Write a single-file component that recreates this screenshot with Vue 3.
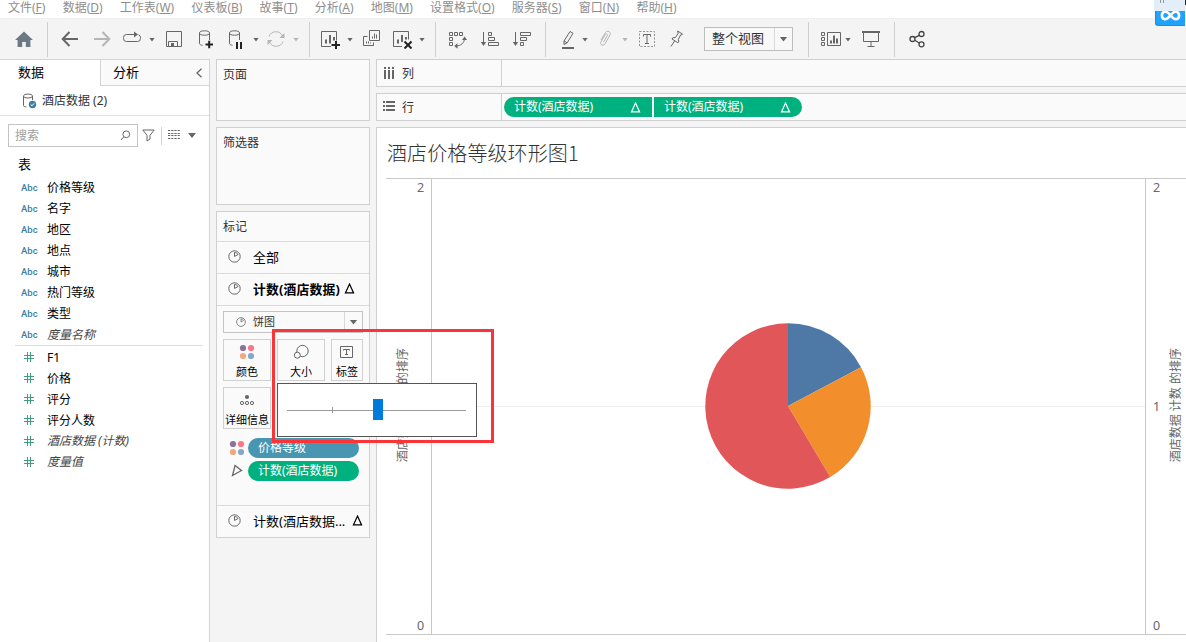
<template>
  <div class="app">
    <nav class="menubar">
      <span v-for="m in menus" :key="m.key" class="menu">{{ m.label }}(<u>{{ m.key }}</u>)</span>
    </nav>

    <div class="toolbar">
      <svg class="tool g14" viewBox="0 0 20 20"><path d="M10 2.500 19 11h-2.600v7h-4.600v-5H8.200v5H3.600v-7H1z" fill="#6b7885" /></svg>
      <i class="sep g13"></i>
      <svg class="tool g12" viewBox="0 0 20 20"><path d="M18 10H3M9.500 3 2.700 10l6.800 7" class="st thick" /></svg>
      <svg class="tool g12 off" viewBox="0 0 20 20"><path d="M2 10h15M10.500 3l6.800 7-6.800 7" class="st thick" /></svg>
      <svg class="tool g10" viewBox="0 0 20 20"><path d="M11 5.500H4.500a3 3 0 0 0-3 3v1a3 3 0 0 0 3 3h11a3 3 0 0 0 3-3v-1a3 3 0 0 0-2-2.800M9 5.500h4" class="st" /><path d="M12 2.500 16 5.500 12 8.500z" fill="#666" /></svg>
      <i class="caret g7"></i>
      <svg class="tool g9" viewBox="0 0 20 20"><path d="M2.500 2.500h15v15h-15zM4.500 17v-4.500h9V17" class="st" /><path d="M7 14h3v3H7z" fill="#666" /></svg>
      <svg class="tool g12" viewBox="0 0 20 20"><path d="M3.500 4v10.500c0 1 1.500 1.600 3 1.800M13.500 4v7" class="st" /><ellipse cx="8.500" cy="4" rx="5" ry="2.200" class="st" /><path d="M9.500 15.500h7.500M13.200 11.700v7.600" stroke="#222" stroke-width="2" /></svg>
      <svg class="tool g10" viewBox="0 0 20 20"><path d="M3.500 4v10.500c0 1 1.500 1.600 3 1.800M13.500 4v7" class="st" /><ellipse cx="8.500" cy="4" rx="5" ry="2.200" class="st" /><path d="M11 13v7M15 13v7" stroke="#222" stroke-width="2" /></svg>
      <i class="caret g7"></i>
      <svg class="tool g7 off" viewBox="0 0 20 20"><path d="M3 7.500A7.300 7.300 0 0 1 16.500 7M17 12.500A7.300 7.300 0 0 1 3.500 13" class="st" /><path d="M18.500 4v5h-5zM1.500 16v-5h5z" fill="#b5b5b5" /></svg>
      <i class="caret g7 off"></i>
      <i class="sep g10"></i>
      <svg class="tool g10" viewBox="0 0 20 20"><path d="M11 17.500H1.500v-15h15v9" class="st" /><path d="M6 14.500v-4M10 14.500V6M14 11.500V8" stroke="#666" stroke-width="2" /><path d="M11.500 16H20M16 12v8" stroke="#222" stroke-width="2" /></svg>
      <i class="caret g7"></i>
      <svg class="tool g8" viewBox="0 0 20 20"><path d="M8.500 1.500h10v10h-10zM6.500 7.500h-4v9h10v-3" class="st" /><path d="M11.500 9.500V7.500M13.500 9.500v-5M15.500 9.500v-4M5.500 14.500v-2M7.500 14.500v-2M9.500 14.500v-1" class="st" /></svg>
      <svg class="tool g11" viewBox="0 0 20 20"><path d="M10 17.500H1.500v-15h15v8" class="st" /><path d="M6 14.500v-4M10 13V6M14 10.500V8" stroke="#666" stroke-width="2" /><path d="m12.500 12.500 7 7M19.500 12.500l-7 7" stroke="#222" stroke-width="2" /></svg>
      <i class="caret g7"></i>
      <i class="sep g10"></i>
      <svg class="tool g11" viewBox="0 0 20 20"><path d="M2.500 3.500h3v3h-3zM7.500 3.500h3v3h-3zM12.500 3.500h3v3h-3zM2.500 8.500h3v3h-3zM2.500 13.500h3v3h-3zM17.500 9.500c0 4-3.500 7.500-8.500 7.500" class="st" /><path d="m15 11 2.700-3.500L20 11zM10.500 14.200 7.200 17l3.300 2.800z" fill="#666" /></svg>
      <svg class="tool g13" viewBox="0 0 20 20"><path d="M3.500 3v12M8.500 3.500h3v3h-3zM8.500 8.500h6v3h-6zM8.500 13.500h10v3h-10z" class="st" /><path d="M.8 13h5.400L3.500 17z" fill="#666" /></svg>
      <svg class="tool g12" viewBox="0 0 20 20"><path d="M3.500 3v12M8.500 3.500h10v3h-10zM8.500 8.500h6v3h-6zM8.500 13.500h3v3h-3z" class="st" /><path d="M.8 13h5.400L3.500 17z" fill="#666" /></svg>
      <i class="sep g13"></i>
      <svg class="tool g12" viewBox="0 0 20 20"><path d="m6 12 6-9.500 3 1.800-5.800 9.500L6 15.500zM6 12l3.200 1.800" class="st" /><path d="M4 19h12" stroke="#666" stroke-width="2" /></svg>
      <i class="caret g4"></i>
      <svg class="tool g7 off" viewBox="0 0 20 20"><path d="m6 11 4.500-7.500c1.700-2.700 6-.8 4.500 2.300l-5 9c-1.500 2.800-5.500 1-4.200-1.800l4.400-7.300c1-1.400 2.800-.3 2.200 1L8.500 13" class="st" /></svg>
      <i class="caret g7 off"></i>
      <svg class="tool g9" viewBox="0 0 20 20"><path d="M2.500 2.500h15v15h-15z" class="st" stroke-dasharray="2 1.500" opacity=".7" /><path d="M6.500 7.500v-2h7v2M10 5.500v9M8 14.500h4" class="st" /></svg>
      <svg class="tool g10" viewBox="0 0 20 20"><path d="m10.500 2 5 3-1 1-.8-.2-2.400 4.700.6 2.500-1.400.5L5 10l.8-1.200 2.700-.3 2.700-4.300zM7.500 12 4 17.500" class="st" /></svg>
      <div class="combo g17"><span>整个视图</span><b><i class="caret wide"></i></b></div>
      <i class="sep g15"></i>
      <svg class="tool g12" viewBox="0 0 20 20"><path d="M.5 3.500h3v3h-3zM.5 8.500h3v3h-3zM.5 13.500h3v3h-3zM6.500 3.500h13v13h-13z" class="st" /><path d="M10 14.500v-3M13 14.500v-8M16 14.500v-5" stroke="#666" stroke-width="2" /></svg>
      <i class="caret g4"></i>
      <svg class="tool g10" viewBox="0 0 20 20"><path d="M2.500 4v8.500h15V4M10 12.500v5M6.500 17.500h7" class="st" /><path d="M1 3h18" stroke="#666" stroke-width="2" /></svg>
      <i class="sep g13"></i>
      <svg class="tool g12" viewBox="0 0 20 20"><circle cx="5.500" cy="10" r="2.500" class="st dk" /><circle cx="14.500" cy="5" r="2.500" class="st dk" /><circle cx="14.500" cy="15.300" r="2.500" class="st dk" /><path d="m7.700 8.700 4.600-2.400M7.700 11.300l4.600 2.700" class="st dk" /></svg>
    </div>

    <main class="work">
      <aside class="data-pane">
        <div class="tabs">
          <div class="tab on">数据</div>
          <div class="tab">分析<svg width="8" height="10" viewBox="0 0 8 10"><path d="M6.500.8 2 5l4.500 4.200" class="st collapse" /></svg></div>
        </div>
        <div class="source">
          <svg width="16" height="16" viewBox="0 0 16 16"><path d="M1.500 3v9.500c0 .8 1.200 1.300 3 1.500M10.500 3v4" class="st" /><ellipse cx="6" cy="3" rx="4.500" ry="2" class="st" /><circle cx="10.500" cy="11.500" r="3.700" fill="#3d7f9f" /><path d="m8.700 11.500 1.300 1.300 2.200-2.500" fill="none" stroke="#fff" /></svg>
          <span>酒店数据 (2)</span>
        </div>
        <div class="search-row">
          <div class="search"><span>搜索</span><svg width="11" height="11" viewBox="0 0 11 11"><circle cx="6.300" cy="4.300" r="3.400" class="st" /><path d="M3.800 6.800 1 10" class="st" /></svg></div>
          <svg class="funnel" width="13" height="13" viewBox="0 0 13 13"><path d="M.8 1h11.400L8 6.300V10l-3 2V6.300z" class="st" /></svg>
          <i class="vline"></i>
          <svg class="list-ico" width="12" height="9" viewBox="0 0 12 9"><path d="M0 .5h12M0 3.500h12M0 5.500h12M0 8.500h12" stroke="#666" stroke-dasharray="2.200 1" /></svg>
          <i class="caret wide"></i>
        </div>
        <h4>表</h4>
        <ul class="fields">
          <li v-for="f in dimensions" :key="f.name" :class="{ it: f.generated }"><span class="abc">Abc</span>{{ f.name }}</li>
        </ul>
        <ul class="fields measures">
          <li v-for="f in measures" :key="f.name" :class="{ it: f.generated }">
            <svg class="hash" width="10" height="10" viewBox="0 0 10 10"><path d="M3.500 0v10M6.500 0v10M0 3.500h10M0 6.500h10" stroke="#3f9f7d" /></svg>{{ f.name }}
          </li>
        </ul>
      </aside>

      <section class="cards">
        <div class="card pages">页面</div>
        <div class="card filters">筛选器</div>
        <div class="card marks">
          <div class="marks-title">标记</div>
          <div class="mark-row">
            <svg class="pie-ico" viewBox="0 0 13 13"><circle cx="6.500" cy="6.500" r="5.700" class="st" /><path d="M6.500 6.500V2.500M6.500 6.500 10 4.500M6.500 2.500c1.500 0 3 .8 3.500 2" class="st" /></svg>全部
          </div>
          <div class="mark-row bold">
            <svg class="pie-ico" viewBox="0 0 13 13"><circle cx="6.500" cy="6.500" r="5.700" class="st" /><path d="M6.500 6.500V2.500M6.500 6.500 10 4.500M6.500 2.500c1.500 0 3 .8 3.500 2" class="st" /></svg>计数(酒店数据)
            <svg class="delta" viewBox="0 0 10 10"><path d="M5 1 8.700 9H1.300z" /></svg>
          </div>
          <div class="mark-body">
            <div class="select">
              <svg class="pie-ico sm" viewBox="0 0 13 13"><circle cx="6.500" cy="6.500" r="5.700" class="st" /><path d="M6.500 6.500V2.500M6.500 6.500 10 4.500M6.500 2.500c1.500 0 3 .8 3.500 2" class="st" /></svg>
              <span>饼图</span><b><i class="caret wide"></i></b>
            </div>
            <div class="buttons">
              <div class="btn"><svg width="16" height="16" viewBox="0 0 16 16"><circle v-for="d in dots" :key="d.fill" :cx="d.x" :cy="d.y" r="3.100" :fill="d.fill" /></svg>颜色</div>
              <div class="btn"><svg width="16" height="16" viewBox="0 0 16 16"><circle cx="9.500" cy="7" r="5.700" class="st" /><circle cx="4.300" cy="11.200" r="3" class="st cover" /></svg>大小</div>
              <div class="btn narrow"><svg width="16" height="16" viewBox="0 0 16 16"><path d="M1.500 2.500h12v11h-12zM4.500 6.500v-1h6v1M7.500 5.500v5M6 10.500h3" class="st" /></svg>标签</div>
              <div class="btn"><svg width="16" height="16" viewBox="0 0 16 16"><circle cx="8" cy="5" r="2.100" fill="#666" /><circle cx="3" cy="11" r="1.600" class="st" /><circle cx="8" cy="11" r="1.600" class="st" /><circle cx="13" cy="11" r="1.600" class="st" /></svg>详细信息</div>
            </div>
            <div class="pill-row">
              <svg width="16" height="16" viewBox="0 0 16 16"><circle v-for="d in dots" :key="d.fill" :cx="d.x" :cy="d.y" r="3.100" :fill="d.fill" /></svg>
              <span class="pill blue">价格等级</span>
            </div>
            <div class="pill-row">
              <svg width="16" height="16" viewBox="0 0 16 16"><path d="M6 2.500 12.500 7.500 3.500 12.500z" class="st shape" /></svg>
              <span class="pill">计数(酒店数据)</span>
            </div>
          </div>
          <div class="mark-row last">
            <svg class="pie-ico" viewBox="0 0 13 13"><circle cx="6.500" cy="6.500" r="5.700" class="st" /><path d="M6.500 6.500V2.500M6.500 6.500 10 4.500M6.500 2.500c1.500 0 3 .8 3.500 2" class="st" /></svg>计数(酒店数据...
            <svg class="delta" viewBox="0 0 10 10"><path d="M5 1 8.700 9H1.300z" /></svg>
          </div>
        </div>
      </section>

      <section class="canvas">
        <div class="shelf">
          <div class="shelf-name"><svg width="12" height="12" viewBox="0 0 12 12"><path d="M2 0v2M6 0v2M10 0v2M2 3v9M6 3v9M10 3v9" stroke="#666" stroke-width="2" /></svg><span>列</span></div>
        </div>
        <div class="shelf">
          <div class="shelf-name"><svg class="rows-ico" width="12" height="12" viewBox="0 0 12 12"><path d="M0 2h2M0 6h2M0 10h2M3 2h9M3 6h9M3 10h9" stroke="#666" stroke-width="2" /></svg><span>行</span></div>
          <div class="row-pills">
            <span v-for="n in 2" :key="n" class="row-pill">计数(酒店数据)<svg class="delta" viewBox="0 0 10 10"><path d="M5 1 8.700 9H1.300z" /></svg></span>
          </div>
        </div>
        <div class="sheet">
          <h1>酒店价格等级环形图1</h1>
          <div class="chart">
            <div class="axis left">
              <span class="axis-title">酒店数据 计数 的排序</span>
              <div class="ticks"><span>2</span><span>1</span><span>0</span></div>
            </div>
            <div class="plot">
              <svg width="166" height="166" viewBox="-83 -83 166 166">
                <path v-for="s in slices" :key="s.fill" :d="s.d" :fill="s.fill" />
              </svg>
            </div>
            <div class="axis right">
              <div class="ticks"><span>2</span><span>1</span><span>0</span></div>
              <span class="axis-title">酒店数据 计数 的排序</span>
            </div>
          </div>
        </div>
      </section>
    </main>

    <div class="slider-popup">
      <svg width="198" height="52" viewBox="0 0 198 52">
        <path d="M9 26.500h179M54.500 23v6" stroke="#999" />
        <path d="M95 15h10v21H95z" fill="#007bdb" />
      </svg>
    </div>
    <div class="highlight"></div>

    <div class="cloud">
      <svg width="32" height="27" viewBox="0 0 32 27">
        <path d="M0 0h32v11H0z" fill="#e4eef8" />
        <path d="M6.500 0v3M9.500 0v3" stroke="#8c9aa8" />
        <path d="M31 0h1v5h-1z" fill="#222" />
        <path d="M1 11h30v15H4a3 3 0 0 1-3-3z" fill="#22a3fb" />
        <path d="M1.500 11v11.500a3 3 0 0 0 3 3H31" fill="none" stroke="#178ee5" />
        <path d="M16.500 15.500c-2-2.800-3.700-4-5.500-4a4 4 0 0 0 0 7.800c4.500 0 6.500-7.800 11-7.800a4 4 0 0 1 0 7.800c-1.800 0-3.500-1.500-5-3.500" fill="none" stroke="#fff" stroke-width="2.600" />
        <path d="M1 10h30v1H1z" fill="#e4eef8" />
      </svg>
    </div>
  </div>
</template>

<script setup>
const menus = [
  { label: '文件', key: 'F' },
  { label: '数据', key: 'D' },
  { label: '工作表', key: 'W' },
  { label: '仪表板', key: 'B' },
  { label: '故事', key: 'T' },
  { label: '分析', key: 'A' },
  { label: '地图', key: 'M' },
  { label: '设置格式', key: 'O' },
  { label: '服务器', key: 'S' },
  { label: '窗口', key: 'N' },
  { label: '帮助', key: 'H' },
];

const dimensions = [
  { name: '价格等级' },
  { name: '名字' },
  { name: '地区' },
  { name: '地点' },
  { name: '城市' },
  { name: '热门等级' },
  { name: '类型' },
  { name: '度量名称', generated: true },
];

const measures = [
  { name: 'F1' },
  { name: '价格' },
  { name: '评分' },
  { name: '评分人数' },
  { name: '酒店数据 (计数)', generated: true },
  { name: '度量值', generated: true },
];

const dots = [
  { x: 4, y: 4, fill: '#8a739b' },
  { x: 12, y: 4, fill: '#ff7486' },
  { x: 4, y: 12, fill: '#f4a77c' },
  { x: 12, y: 12, fill: '#86a6cb' },
];

// ángulos en grados, desde las 12 en sentido horario
const RADIUS = 82.7;
const point = deg => {
  const a = (deg * Math.PI) / 180;
  return `${(RADIUS * Math.sin(a)).toFixed(2)} ${(-RADIUS * Math.cos(a)).toFixed(2)}`;
};

const slices = [
  { from: 0, to: 62, fill: '#4e79a7' },
  { from: 62, to: 149.3, fill: '#f28e2b' },
  { from: 149.3, to: 360, fill: '#e15759' },
].map(s => ({
  fill: s.fill,
  d: `M0 0L${point(s.from)}A${RADIUS} ${RADIUS} 0 ${s.to - s.from > 180 ? 1 : 0} 1 ${point(s.to)}Z`,
}));
</script>

<style>
body {
  margin: 0;
  overflow: hidden;
}
</style>

<style scoped>
.app {
  position: relative;
  display: flex;
  flex-direction: column;
  width: 1186px;
  height: 642px;
  overflow: hidden;
  background: #f4f4f4;
  color: #333;
  font: 12px/16px "Noto Sans", "Noto Sans CJK SC", sans-serif;
}
.app * { box-sizing: border-box; }
svg { display: block; flex: none; }
.st { fill: none; stroke: #666; stroke-width: 1; }
.st.thick { stroke-width: 2; }
.st.dk { stroke: #444; stroke-width: 1.3; }
.st.collapse, .st.shape { stroke-width: 1.3; }
.st.cover { fill: #fafafa; }
.off .st { stroke: #b5b5b5; }

/* MENÚ */
.menubar {
  display: flex;
  flex: none;
  gap: 17.2px;
  height: 18px;
  padding-left: 8px;
  background: #fff;
  color: #8e8e8e;
  white-space: nowrap;
}

/* BARRA DE HERRAMIENTAS */
.toolbar {
  display: flex;
  flex: none;
  align-items: center;
  height: 41px;
  border-top: 1px solid #f0f0f0;
}
.tool { width: 20px; height: 20px; }
.sep { width: 1px; height: 35px; background: #cfcfcf; }
.caret {
  width: 6px;
  height: 4px;
  margin-top: 1px;
  background: #666;
  clip-path: polygon(0 0, 100% 0, 50% 100%);
}
.caret.off { background: #b5b5b5; }
.caret.wide { width: 8px; height: 5px; margin-top: 0; }
.g4 { margin-left: 4px; }
.g7 { margin-left: 7px; }
.g8 { margin-left: 8px; }
.g9 { margin-left: 9px; }
.g10 { margin-left: 10px; }
.g11 { margin-left: 11px; }
.g12 { margin-left: 12px; }
.g13 { margin-left: 13px; }
.g14 { margin-left: 14px; }
.g15 { margin-left: 15px; }
.g17 { margin-left: 17px; }
.combo {
  display: flex;
  width: 89px;
  height: 24px;
  border: 1px solid #bdbdbd;
  background: #f8f8f8;
  font-size: 13px;
  line-height: 21px;
}
.combo span { flex: 1; padding-left: 7px; white-space: nowrap; }
.combo b, .select b {
  display: flex;
  align-items: center;
  justify-content: center;
  width: 18px;
  border-left: 1px solid #d8d8d8;
}

.work { display: flex; flex: 1; min-height: 0; }

/* PANEL DE DATOS */
.data-pane {
  flex: none;
  width: 210px;
  border-top: 1px solid #d4d4d4;
  border-right: 1px solid #d4d4d4;
  background: #fff;
  color: #000;
}
.tabs { display: flex; height: 26px; font-size: 13px; line-height: 25px; }
.tab {
  display: flex;
  align-items: center;
  justify-content: space-between;
  flex: 1;
  padding: 0 6px 0 12px;
  border-left: 1px solid #d4d4d4;
  border-bottom: 1px solid #d4d4d4;
  background: #fafafa;
}
.tab.on { flex: none; width: 100px; padding: 0 0 1px 18px; border: 0; background: #fff; }
.source {
  display: flex;
  align-items: center;
  gap: 4px;
  height: 30px;
  padding-left: 22px;
  border-bottom: 1px solid #e2e2e2;
  color: #333;
}
.search-row { display: flex; align-items: center; height: 23px; margin: 8px 0 0 8px; }
.search {
  display: flex;
  align-items: center;
  justify-content: space-between;
  width: 130px;
  height: 23px;
  padding: 0 6px;
  border: 1px solid #c4c4c4;
  color: #a0a0a0;
}
.funnel { margin-left: 4px; }
.vline { width: 1px; height: 18px; margin: 0 6px; background: #d4d4d4; }
.list-ico { margin-bottom: 2px; }
.search-row .caret { margin-left: 8px; }
h4 { margin: 9px 0 0 18px; font-size: 13px; font-weight: 400; line-height: 16px; }
.fields { margin: 5px 0 0; padding: 0; list-style: none; }
.fields li { display: flex; align-items: center; height: 21px; padding-left: 21px; }
.fields .it { color: #444; font-style: italic; }
.abc {
  width: 26px;
  color: #3d7f9f;
  font: 500 9.5px/16px Roboto, sans-serif;
}
.measures { margin: 0 6px 0 15px; border-top: 1px solid #dcdcdc; }
.measures li { padding-left: 9px; }
.measures li:not(.it) { padding-top: 2px; }
.measures li:not(.it) .hash { margin-bottom: 1px; }
.hash { margin-right: 13px; }

/* TARJETAS */
.cards { flex: none; width: 154px; margin-left: 6px; }
.card {
  margin-bottom: 6px;
  border: 1px solid #d0d0d0;
  background: #fafafa;
}
.pages, .filters { padding: 7px 6px; }
.pages { height: 62px; }
.filters { height: 78px; }
.marks { height: 327px; }
.marks-title { height: 29px; padding: 7px 6px 0; }
.mark-row {
  display: flex;
  align-items: center;
  height: 32px;
  padding: 0 0 2px 11px;
  border-top: 1px solid #dadada;
  color: #000;
  font-size: 13px;
  white-space: nowrap;
}
.mark-row.bold { padding-bottom: 2px; font-weight: 700; font-size: 12.8px; letter-spacing: .2px; }
.pie-ico { width: 13px; height: 13px; margin-right: 12px; }
.pie-ico.sm { width: 10px; height: 10px; margin: 0 7px 0 12px; }
.delta { width: 11px; height: 11px; margin-left: 4px; }
.delta path { fill: none; stroke: currentColor; stroke-width: 1.1; }
.last .delta { margin-left: 7px; }
.mark-body { height: 200px; padding: 5px 6px 0; border-top: 1px solid #dadada; }
.select {
  display: flex;
  align-items: center;
  height: 22px;
  border: 1px solid #c4c4c4;
  font-size: 11px;
}
.select span { flex: 1; }
.select b { height: 20px; }
.buttons { display: flex; flex-wrap: wrap; gap: 6px; margin: 6px -1px 9px 0; }
.btn {
  display: flex;
  flex-direction: column;
  align-items: center;
  gap: 4px;
  width: 48px;
  height: 42px;
  padding-top: 4px;
  border: 1px solid #d0d0d0;
  color: #000;
  font-size: 11px;
  line-height: 15px;
  white-space: nowrap;
}
.btn.narrow { width: 32px; }
.pill-row { display: flex; align-items: center; gap: 3px; height: 20px; margin: 0 -2px 3px 6px; }
.pill {
  width: 111px;
  height: 20px;
  padding-left: 10px;
  border-radius: 10px;
  background: #00b180;
  color: #fff;
  line-height: 19px;
}
.pill.blue { background: #4996b2; }

/* ESTANTES Y HOJA */
.canvas { display: flex; flex: 1; flex-direction: column; margin-left: 6px; }
.shelf {
  display: flex;
  flex: none;
  height: 28px;
  margin-bottom: 6px;
  border: 1px solid #d0d0d0;
  border-right: 0;
  background: #fafafa;
}
.shelf-name {
  display: flex;
  align-items: center;
  gap: 7px;
  width: 125px;
  padding-left: 6px;
  border-right: 1px solid #d0d0d0;
}
.shelf-name span { padding-top: 2px; }
.rows-ico { margin-bottom: 2px; }
.row-pills { display: flex; gap: 2px; padding: 3px 2px; }
.row-pill {
  display: flex;
  align-items: center;
  justify-content: space-between;
  width: 148px;
  height: 20px;
  padding: 0 11px 0 10px;
  border-radius: 10px 0 0 10px;
  background: #00b180;
  color: #fff;
}
.row-pill:last-child { border-radius: 0 10px 10px 0; }
.sheet {
  flex: 1;
  border: 1px solid #d0d0d0;
  border-width: 1px 0 0 1px;
  background: #fff;
}
h1 {
  height: 50px;
  margin: 0;
  padding-left: 10px;
  font: 300 20px/49px "Noto Sans CJK SC", sans-serif;
  letter-spacing: .1px;
}
.chart {
  display: flex;
  height: 457px;
  margin-left: 9px;
  border: 1px solid #c8c8c8;
  border-width: 1px 0;
  color: #666;
  font-size: 13px;
}
.axis { display: flex; align-items: center; }
.left { width: 45px; padding-left: 9px; }
.right { width: 40px; padding-left: 7px; }
.ticks {
  display: flex;
  flex-direction: column;
  justify-content: space-between;
  height: 100%;
  padding-top: 1px;
  font-size: 12.5px;
}
.left .ticks { margin-left: 6px; }
.axis-title {
  width: 16px;
  margin-bottom: 3px;
  writing-mode: vertical-rl;
  text-orientation: sideways;
  transform: rotate(180deg);
  font-size: 12px;
  line-height: 16px;
  white-space: nowrap;
}
.right .axis-title { margin-left: 8px; }
.plot {
  display: flex;
  align-items: center;
  justify-content: center;
  flex: 1;
  padding: 0 2px 2px 0;
  border: 1px solid #c8c8c8;
  border-width: 0 1px;
  background: linear-gradient(#eee, #eee) 0 227px / 100% 1px no-repeat;
}

/* CAPAS SUPERPUESTAS */
.slider-popup {
  position: absolute;
  left: 277px;
  top: 383px;
  width: 200px;
  height: 54px;
  border: 1px solid #555;
  background: #fff;
}
.highlight {
  position: absolute;
  left: 272px;
  top: 329px;
  width: 222px;
  height: 114px;
  border: 3px solid #fb3537;
}
.cloud { position: absolute; right: 0; top: 0; }
</style>
